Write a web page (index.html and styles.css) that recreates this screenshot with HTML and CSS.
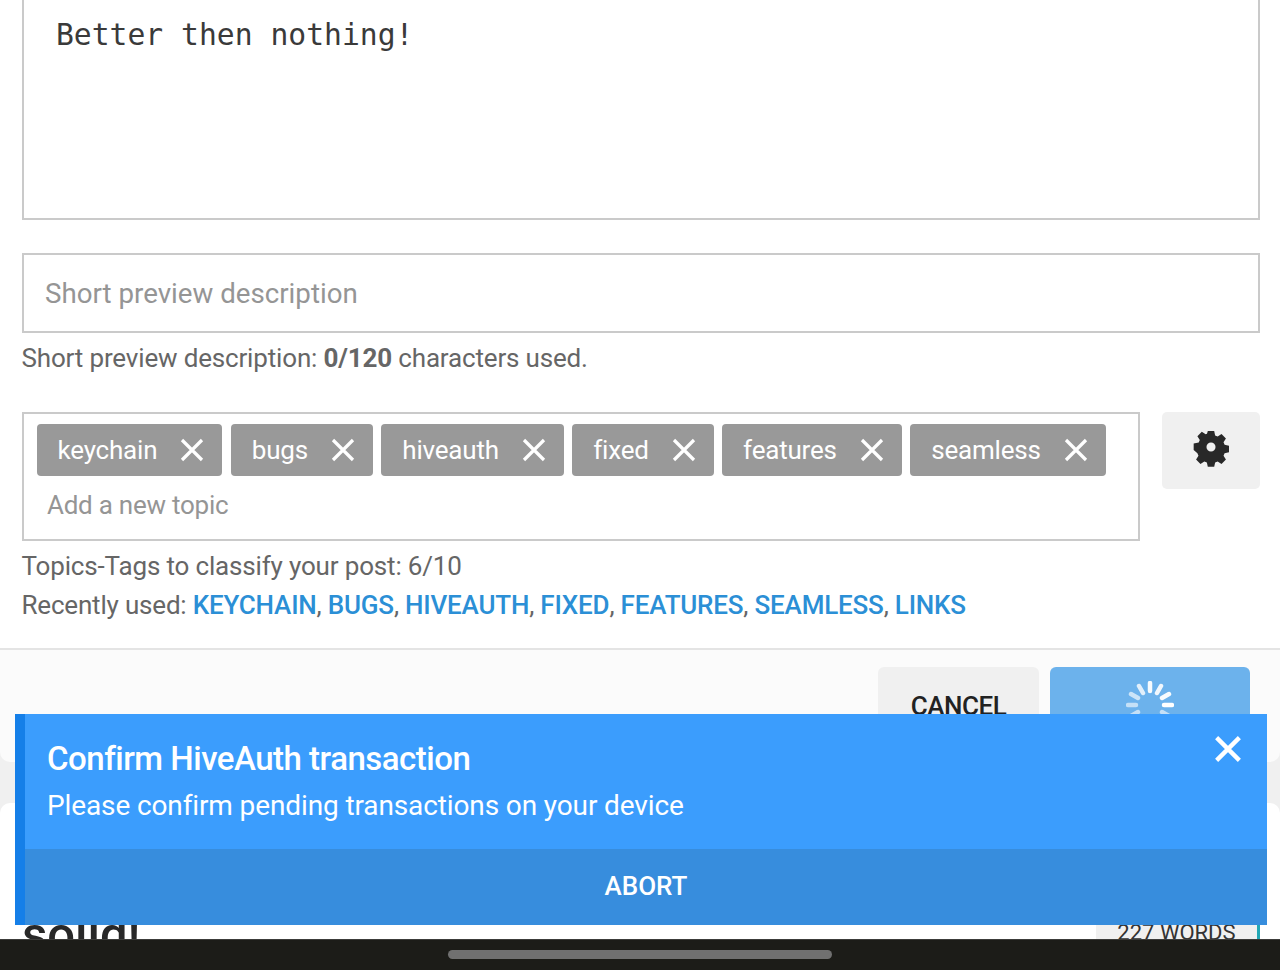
FILE: index.html
```html
<!DOCTYPE html>
<html lang="en">
<head>
<meta charset="utf-8">
<title>Confirm HiveAuth transaction</title>
<link rel="stylesheet" href="styles.css">
</head>
<body>
<div class="page">
  <section class="editor">
    <div class="body-box">Better then nothing!</div>
    <div class="preview-box">Short preview description</div>
    <p class="hint count">Short preview description: <b>0/120</b> characters used.</p>
    <div class="tag-row">
      <div class="tag-box">
        <div class="tags">
          <span class="tag">keychain<svg class="x" viewBox="0 0 24 24"><path d="M2 2L22 22M22 2L2 22"/></svg></span>
          <span class="tag">bugs<svg class="x" viewBox="0 0 24 24"><path d="M2 2L22 22M22 2L2 22"/></svg></span>
          <span class="tag">hiveauth<svg class="x" viewBox="0 0 24 24"><path d="M2 2L22 22M22 2L2 22"/></svg></span>
          <span class="tag">fixed<svg class="x" viewBox="0 0 24 24"><path d="M2 2L22 22M22 2L2 22"/></svg></span>
          <span class="tag">features<svg class="x" viewBox="0 0 24 24"><path d="M2 2L22 22M22 2L2 22"/></svg></span>
          <span class="tag">seamless<svg class="x" viewBox="0 0 24 24"><path d="M2 2L22 22M22 2L2 22"/></svg></span>
        </div>
        <div class="add-topic">Add a new topic</div>
      </div>
      <div class="gear-btn">
        <svg class="gear" viewBox="0 0 24 24"><path fill-rule="evenodd" d="M9.6 0h4.8l.7 3.3 1.9.8 2.9-1.8 3.3 3.3-1.8 2.9.8 1.9 3.3.7v4.8l-3.3.7-.8 1.9 1.8 2.9-3.3 3.3-2.9-1.8-1.9.8-.7 3.2H9.6l-.7-3.2-1.9-.8-2.9 1.8-3.3-3.3 1.8-2.9-.8-1.9L-1 14.2V9.4l3.8-.7.8-1.9-1.8-2.9 3.3-3.3L8 2.4l1-.3zM12 8.6a3.4 3.4 0 1 0 0 6.8 3.4 3.4 0 0 0 0-6.8z"/></svg>
      </div>
    </div>
    <p class="hint topics">Topics-Tags to classify your post: 6/10</p>
    <p class="hint recent">Recently used: <a>KEYCHAIN</a>, <a>BUGS</a>, <a>HIVEAUTH</a>, <a>FIXED</a>, <a>FEATURES</a>, <a>SEAMLESS</a>, <a>LINKS</a></p>
  </section>
  <footer class="actions">
    <div class="btn cancel">CANCEL</div>
    <div class="btn submit">
      <svg class="spinner" viewBox="0 0 48 48">
        <g stroke="#fff" stroke-width="4.5" stroke-linecap="round">
          <path opacity=".95" d="M24 2v8"/>
          <path opacity=".9" d="M35 5l-4 7"/>
          <path opacity=".95" d="M43 13l-7 4"/>
          <path d="M46 24h-8"/>
          <path opacity=".6" d="M43 35l-7-4"/>
          <path opacity=".6" d="M5 35l7-4"/>
          <path opacity=".6" d="M2 24h8"/>
          <path opacity=".65" d="M5 13l7 4"/>
          <path opacity=".8" d="M13 5l4 7"/>
        </g>
      </svg>
    </div>
  </footer>
  <div class="gap"></div>
  <section class="card">
    <h2 class="solid">solid!</h2>
    <div class="words">227 WORDS</div>
  </section>
</div>

<aside class="toast">
  <div class="toast-main">
    <h3 class="toast-title">Confirm HiveAuth transaction</h3>
    <p class="toast-text">Please confirm pending transactions on your device</p>
    <svg class="toast-close" viewBox="0 0 24 24"><path d="M1.5 1.5L22.5 22.5M22.5 1.5L1.5 22.5"/></svg>
  </div>
  <div class="toast-abort">ABORT</div>
</aside>

<div class="nav-bar"><span class="handle"></span></div>
</body>
</html>
```

FILE: styles.css
```css
* { box-sizing: border-box; }
html, body { margin: 0; height: 970px; overflow: hidden; background: #fff; }
body { font-family: Roboto, "Liberation Sans", sans-serif; color: #666; }

.page { width: 1280px; height: 970px; overflow: hidden; display: flex; flex-direction: column; background: #f0f0f0; }
.editor { background: #fff; padding: 0 20px 0 21.5px; height: 648px; flex: none; }

.body-box {
  height: 220px;
  border: 2px solid #cacaca;
  border-top: 0;
  padding: 16px 32.5px;
  font: 29.7px/38px "DejaVu Sans Mono", monospace;
  color: #3a3a3a;
}
.preview-box {
  height: 80px;
  margin-top: 33px;
  border: 2px solid #cacaca;
  padding: 0 21.5px;
  display: flex;
  align-items: center;
  font-size: 27.7px;
  color: #959595;
}
.hint { margin: 0; font-size: 26px; letter-spacing: -.165px; line-height: 39px; color: #666; white-space: nowrap; }
.hint b { font-weight: 700; }
.count { margin-top: 6px; }
.tag-row { display: flex; justify-content: space-between; margin-top: 34px; }
.tag-box { width: 1118.5px; height: 129px; border: 2px solid #cacaca; padding: 10px 13px; }
.tags { display: flex; gap: 8.4px; }
.tag {
  height: 52px;
  padding: 0 18px 0 21px;
  display: flex;
  align-items: center;
  background: #999;
  border-radius: 4px;
  color: #fff;
  font-size: 26px;
  letter-spacing: -.2px;
}
.x { width: 24px; height: 24px; margin-left: 23px; fill: none; stroke: #fff; stroke-width: 3.2; }
.add-topic { margin: 12px 0 0 10.5px; font-size: 26px; letter-spacing: -.25px; line-height: 34px; color: #959595; }
.gear-btn { width: 98px; height: 77px; background: #f0f0f0; border-radius: 5px; display: flex; justify-content: center; padding-top: 19px; }
.gear { width: 32px; height: 32px; fill: #282828; overflow: visible; }
.topics { margin-top: 6px; }
.recent { letter-spacing: -.19px; }
.recent a { color: #2b8fd6; font-weight: 500; }

.actions { height: 114px; flex: none; border-top: 2px solid #e4e4e4; border-radius: 0 0 10px 10px; background: #fbfbfb; display: flex; justify-content: flex-end; gap: 11px; padding: 17px 30px 0 0; }
.btn { width: 161px; height: 90px; border-radius: 6px; }
.cancel { background: #f0f0f0; color: #222; font-size: 26px; letter-spacing: -.45px; font-weight: 500; text-align: center; line-height: 78px; }
.submit { width: 200px; background: #6cb2ec; display: flex; justify-content: center; padding-top: 14px; }
.spinner { width: 48px; height: 48px; }

.gap { height: 41px; flex: none; }
.card { flex: 1; background: #fff; border-radius: 10px 10px 0 0; display: flex; justify-content: space-between; align-items: flex-start; padding: 0 20px 0 22px; }
.solid { margin: 104px 0 0; font-size: 49px; line-height: 56px; font-weight: 500; color: #282828; }
.words { width: 164px; height: 34px; margin-top: 102px; background: #f0f0f0; border-right: 3px solid #22a7b5; font-size: 22px; line-height: 56px; text-align: center; color: #333; white-space: nowrap; }

.toast { position: absolute; left: 15px; top: 714px; width: 1252px; height: 211px; border-left: 10px solid #157fe8; background: #3b9dfd; color: #fff; }
.toast-main { position: relative; height: 135px; padding: 24px 22px 0; }
.toast-title { margin: 0; font-size: 33px; letter-spacing: -.5px; line-height: 42px; font-weight: 500; }
.toast-text { margin: 8px 0 0; font-size: 28px; letter-spacing: -.12px; line-height: 36px; }
.toast-close { position: absolute; right: 26px; top: 22px; width: 26px; height: 26px; fill: none; stroke: #fff; stroke-width: 4; }
.toast-abort { height: 76px; background: #378ddd; display: flex; align-items: center; justify-content: center; font-size: 26px; font-weight: 500; padding-bottom: 2px; }

.nav-bar { position: absolute; left: 0; top: 939px; width: 1280px; height: 31px; background: #1c1c18; border-top: 1px solid #3c3c3a; display: flex; justify-content: center; padding-top: 10px; }
.handle { width: 384px; height: 9px; border-radius: 5px; background: #707070; }
```
